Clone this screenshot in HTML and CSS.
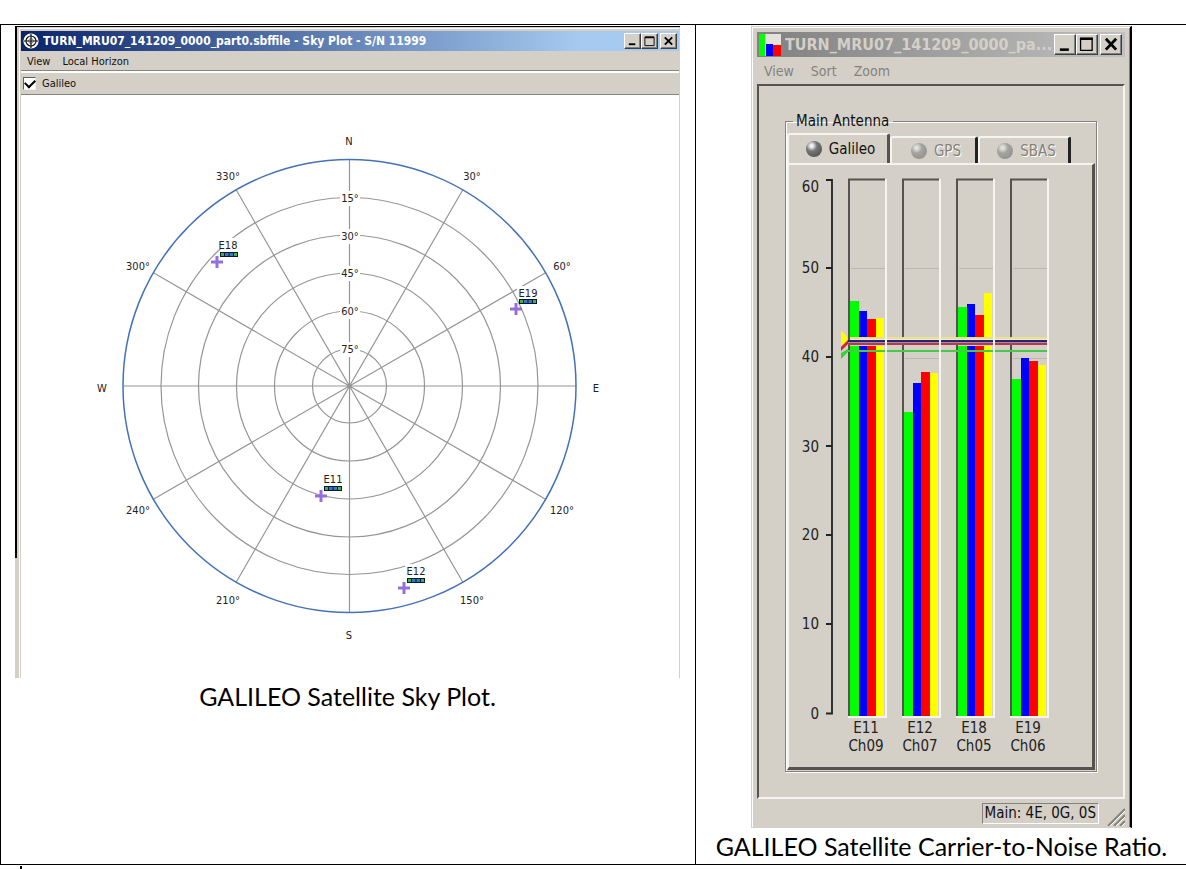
FILE: index.html
```html
<!DOCTYPE html>
<html lang="en">
<head>
<meta charset="utf-8">
<title>GALILEO satellites</title>
<link rel="stylesheet" href="styles.css">
</head>
<body>
<main class="sheet">
  <figure class="cell">
    <div class="backdrop">
      <section class="window sky">
        <header class="titlebar">
          <svg class="app-icon" viewBox="0 0 16 16" aria-hidden="true">
            <circle cx="8" cy="8" r="7.6" fill="#fff"/>
            <g fill="none" stroke="#111"><circle cx="8" cy="8" r="5" stroke-width="1.200"/><circle cx="8" cy="8" r="2.4" stroke-width=".5"/><path d="M8 1v14M1 8h14" stroke-width="1.200"/></g>
          </svg>
          <h1 class="title">TURN_MRU07_141209_0000_part0.sbffile - Sky Plot - S/N 11999</h1>
          <div class="controls">
            <button class="control" aria-label="Minimize"><svg viewBox="0 0 14 13"><path d="M3 10h7" stroke="#000" stroke-width="2"/></svg></button>
            <button class="control" aria-label="Maximize"><svg viewBox="0 0 14 13"><path d="M2 2.5h10v9h-10z" fill="none" stroke="#000"/><path d="M2 2.5h10" stroke="#000" stroke-width="2"/></svg></button>
            <button class="control close" aria-label="Close"><svg viewBox="0 0 14 13"><path d="M3 2.5l8 8M11 2.5l-8 8" stroke="#000" stroke-width="2"/></svg></button>
          </div>
        </header>
        <nav class="menu"><button>View</button><button>Local Horizon</button></nav>
        <div class="filter"><input type="checkbox" id="galileo" checked><label for="galileo">Galileo</label></div>
        <svg class="plot" viewBox="21 95 658 583" role="img" aria-label="Sky plot">
          <g fill="none" stroke="#969696" stroke-width="1.2">
            <circle cx="349.5" cy="386" r="37"/><circle cx="349.5" cy="386" r="75"/><circle cx="349.5" cy="386" r="113"/><circle cx="349.5" cy="386" r="151"/><circle cx="349.5" cy="386" r="188.500"/>
            <path d="M349.500 159V612M123 386H576M236 189.500L463 582.500M463 189.500L236 582.500M153 272.500L546 499.500M546 272.500L153 499.500"/>
          </g>
          <circle cx="349.500" cy="386" r="226.500" fill="none" stroke="#4472b8" stroke-width="1.5"/>
          <g fill="#fff">
            <path d="M340 191h20v15h-20zM340 229h20v15h-20zM340 266h20v15h-20zM340 304h20v15h-20zM340 342h20v15h-20z"/>
            <path d="M218 238h21v11h-21zM517 286h21v11h-21zM322 472h22v11h-22zM405 564h22v11h-22z"/>
          </g>
          <g class="plot-text">
            <text x="349" y="145">N</text><text x="596" y="392">E</text><text x="349" y="639">S</text><text x="102" y="392">W</text>
            <text x="472" y="180">30°</text><text x="562" y="270">60°</text><text x="562" y="514">120°</text><text x="472" y="604">150°</text>
            <text x="228" y="604">210°</text><text x="138" y="514">240°</text><text x="138" y="270">300°</text><text x="228" y="180">330°</text>
            <text x="350" y="202">15°</text><text x="350" y="240">30°</text><text x="350" y="277">45°</text><text x="350" y="315">60°</text><text x="350" y="353">75°</text>
            <text x="228" y="249">E18</text><text x="528" y="297">E19</text><text x="333" y="483">E11</text><text x="416" y="575">E12</text>
          </g>
          <defs>
            <g id="sat">
              <path d="M-6 0H6M0-6V6" stroke="#9370db" stroke-width="3"/>
              <path d="M3-10h18v5H3z" fill="#0b1830"/>
              <path d="M4-9h3v3H4zM17-9h3v3h-3z" fill="#38b64a"/><path d="M8-9h3.500v3H8zM12.500-9H16v3h-3.500z" fill="#3178c8"/>
            </g>
          </defs>
          <use href="#sat" x="217" y="262"/><use href="#sat" x="516" y="309"/><use href="#sat" x="321" y="496"/><use href="#sat" x="404" y="588"/>
        </svg>
      </section>
    </div>
    <figcaption>GALILEO Satellite Sky Plot.</figcaption>
  </figure>

  <figure class="cell">
    <section class="window ratio">
      <header class="titlebar">
        <svg class="app-icon" viewBox="0 0 22 22" aria-hidden="true"><path d="M0 0h22v22H0z" fill="#e4e2dc"/><path d="M0 0h6v22H0z" fill="#0f0"/><path d="M7 10h7v12H7z" fill="#00f"/><path d="M14 11h8v11h-8z" fill="#f00"/></svg>
        <h2 class="title">TURN_MRU07_141209_0000_pa...</h2>
        <div class="controls">
          <button class="control" aria-label="Minimize"><svg viewBox="0 0 14 13"><path d="M3 10.500h7" stroke="#000" stroke-width="2"/></svg></button>
          <button class="control" aria-label="Maximize"><svg viewBox="0 0 14 13"><path d="M2 2h9v9h-9z" fill="none" stroke="#000"/><path d="M1.500 2h10" stroke="#000" stroke-width="2"/></svg></button>
          <button class="control close" aria-label="Close"><svg viewBox="0 0 14 13"><path d="M3 2l8 8.500M11 2l-8 8.500" stroke="#000" stroke-width="2.200"/></svg></button>
        </div>
      </header>
      <nav class="menu"><button>View</button><button>Sort</button><button>Zoom</button></nav>
      <div class="client">
        <fieldset class="group">
          <legend>Main Antenna</legend>
          <div class="tabs" role="tablist">
            <button class="tab active" role="tab" aria-selected="true"><span class="led"></span>Galileo</button>
            <button class="tab" role="tab" aria-selected="false"><span class="led"></span>GPS</button>
            <button class="tab" role="tab" aria-selected="false"><span class="led"></span>SBAS</button>
          </div>
          <div class="page">
            <svg class="chart" viewBox="789 165 303 602" role="img" aria-label="Carrier-to-noise ratio">
              <path d="M826 180H832V713.500H826M826 268H832M826 357H832M826 446H832M826 535H832M826 624H832" fill="none" stroke="#222" stroke-width="1.800"/>
              <g class="scale"><text x="819" y="192">60</text><text x="819" y="273">50</text><text x="819" y="362">40</text><text x="819" y="452">30</text><text x="819" y="540">20</text><text x="819" y="629">10</text><text x="819" y="719">0</text></g>
              <path d="M851 268.500h34M905 268.500h34M959 268.500h34M1013 268.500h34M905 358.500h34M1013 358.500h34" stroke="#bab7b0"/>
              <path fill="#0f0" d="M850 301h9v415h-9zM904 412h9v304h-9zM958 307h9v409h-9zM1012 379h9v337h-9z"/>
              <path fill="#00f" d="M859 311h8v405h-8zM913 383h8v333h-8zM967 304h8v412h-8zM1021 358h8v358h-8z"/>
              <path fill="#f00" d="M867 319h9v397h-9zM921 372h9v344h-9zM975 315h9v401h-9zM1029 361h9v355h-9z"/>
              <path fill="#ff0" d="M876 318h8v398h-8zM930 373h8v343h-8zM984 293h8v423h-8zM1038 365h8v351h-8z"/>
              <path d="M849 716V179.500H885M903 716V179.500H939M957 716V179.500H993M1011 716V179.500H1047" fill="none" stroke="#555250" stroke-width="2"/>
              <path d="M850 337h197v2H850z" fill="#ede283"/><path d="M850 339h197v1H850z" fill="#eeeade"/>
              <path d="M848 340h199v2H848z" fill="#24247c"/><path d="M848 342h199v1H848z" fill="#9b8ba7"/><path d="M848 343h199v2H848z" fill="#bd3842"/><path d="M850 345h34v1h-34zM958 345h34v1h-34z" fill="#d4d0c8"/><path d="M848 350h199v2H848z" fill="#47c94a"/>
              <path d="M841 330L847 337V341L841 345z" fill="#ff0"/><path d="M841 347L848 340V344L841 351z" fill="#cf2327"/><path d="M841 353L848 349V352L841 359z" fill="#30d638"/>
              <path d="M886 179V717H848M940 179V717H902M994 179V717H956M1048 179V717H1010" fill="none" stroke="#f6f4f0" stroke-width="2"/>
              <g class="names"><text x="866" y="733">E11</text><text x="866" y="751">Ch09</text><text x="920" y="733">E12</text><text x="920" y="751">Ch07</text><text x="974" y="733">E18</text><text x="974" y="751">Ch05</text><text x="1028" y="733">E19</text><text x="1028" y="751">Ch06</text></g>
            </svg>
          </div>
        </fieldset>
      </div>
      <footer class="status"><span class="panel">Main: 4E, 0G, 0S</span>
        <svg class="grip" viewBox="0 0 18 18" aria-hidden="true"><path d="M1 18L18 1M7 18L18 7M13 18L18 13" stroke="#85827c" stroke-width="2"/><path d="M3 18L18 3M9 18L18 9M15 18L18 15" stroke="#fff"/></svg>
      </footer>
    </section>
    <figcaption>GALILEO Satellite Carrier-to-Noise Ratio.</figcaption>
  </figure>
</main>
<div class="row-mark"></div>
</body>
</html>
```
FILE: styles.css
```css
* { box-sizing: border-box; }
body { margin: 0; background: #fff; color: #111; font-family: "DejaVu Sans Condensed", "DejaVu Sans", sans-serif; overflow-x: hidden; }
button { font: inherit; color: inherit; border: 0; padding: 0; background: none; }
h1, h2, figure { margin: 0; }
svg { display: block; }

.sheet { display: grid; grid-template-columns: minmax(0, 695fr) minmax(0, 491fr); margin-top: 24px; border: 1px solid #000; border-width: 1px 0; }
.cell { min-width: 0; border-left: 1px solid #000; padding: 1px 15px 0 14px; }
.cell + .cell { padding: 1px 54px 0 55px; }
figcaption { font-family: Lato, sans-serif; font-size: 25px; line-height: 36px; text-align: center; color: #000; white-space: nowrap; }
.cell + .cell figcaption { margin: 0 -54px; }
.row-mark { width: 2px; height: 3px; margin: 1px 0 0 20px; background: #000; }

.window { background: #d4d0c8; }
.titlebar { display: flex; align-items: center; color: #fff; }
.title { flex: 1; min-width: 0; overflow: hidden; white-space: nowrap; font-weight: bold; }
.controls { display: flex; }
.control { display: grid; place-items: center; background: #d4d0c8; border: 1px solid; border-color: #fff #404040 #404040 #fff; box-shadow: inset -1px -1px #808080; }
.control.close { margin-left: 2px; }
.menu { display: flex; align-items: center; }

.backdrop { padding: 1px 0 0 2px; background: linear-gradient(#000 532px, #d4d0c8 532px); }
.sky { border-left: 2px solid #d4d0c8; border-top: 1px solid #d4d0c8; border-right: 1px solid #d4d0c8; box-shadow: inset 1px 1px #fff; padding: 3px 0 0 2px; font-size: 11px; }
.sky .titlebar { height: 20px; padding: 0 2px; gap: 4px; background: linear-gradient(90deg, #0a246a, #a6caf0 85%); }
.sky .app-icon { width: 16px; height: 16px; }
.sky .title { font-size: 12px; }
.sky .control { width: 17px; height: 16px; }
.sky .control svg { width: 13px; height: 12px; }
.sky .menu { height: 20px; padding: 2px 6px 0; gap: 12px; border-bottom: 1px solid #88857e; }
.filter { display: flex; align-items: center; gap: 6px; height: 24px; padding: 0 2px; border-top: 2px solid #fff; border-bottom: 1px solid #88857e; }
.filter input { appearance: none; width: 13px; height: 13px; margin: 0; background: #fff; border: 1px solid; border-color: #606060 #eee #eee #606060; display: grid; place-items: center; }
.filter input:checked::after { content: ""; width: 8px; height: 5px; border-left: 2px solid #000; border-bottom: 2px solid #000; transform: rotate(-45deg); margin-bottom: 3px; }
.plot { width: 100%; height: auto; background: #fff; }
.plot-text { font-size: 11px; text-anchor: middle; fill: #222; }

.ratio { border: 1px solid #d4d0c8; border-right: 2px solid #000; box-shadow: inset 1px 1px #fff, inset -1px 0 #808080; padding: 5px 5px 0 5px; font-size: 15px; }
.ratio .titlebar { height: 25px; padding: 0 3px 0 2px; background: linear-gradient(90deg, #808080, #c0c0c0); color: #d4d0c8; }
.ratio .app-icon { width: 22px; height: 22px; margin-right: 4px; }
.ratio .title { font-size: 16px; }
.ratio .control { width: 22px; height: 21px; }
.ratio .control svg { width: 18px; height: 17px; }
.ratio .menu { height: 27px; padding: 0 7px; gap: 17px; color: #85827c; font-size: 14px; }
.client { border: 2px solid; border-color: #555250 #f6f4f0 #f6f4f0 #555250; padding: 26px 26px 25px; }
.group { min-width: 0; margin: 0; border: 1px solid #85827c; box-shadow: 1px 1px #fff, inset 1px 1px #fff; padding: 0 1px 1px; }
.group legend { margin-left: 6px; padding: 0 4px 0 3px; font-size: 15px; line-height: 18px; }
.tabs { display: flex; align-items: flex-end; height: 33px; }
.tab { display: flex; align-items: center; justify-content: center; gap: 7px; width: 88px; height: 27px; border-top: 2px solid #f6f4f0; border-left: 2px solid #f6f4f0; border-right: 3px solid #222; border-radius: 3px 3px 0 0; color: #85827c; text-shadow: 1px 1px #fff; font-size: 15px; }
.tab { padding-left: 5px; }
.tab.active { width: 103px; height: 30px; color: #111; text-shadow: none; border-right-color: #555250; }
.tab:last-child { width: 93px; }
.led { width: 16px; height: 16px; border-radius: 50%; background: radial-gradient(circle at 35% 30%, #eee 0 10%, #777 35%, #444); }
.tab:not(.active) .led { opacity: .5; }
.page { border: 2px solid #f6f4f0; border-right: 3px solid #555250; border-bottom: 3px solid #555250; }
.chart { width: 100%; height: auto; }
.scale, .names { font-size: 15px; fill: #222; }
.scale { text-anchor: end; }
.names { text-anchor: middle; }
.status { display: flex; justify-content: flex-end; align-items: center; height: 28px; gap: 8px; }
.panel { border: 1px solid; border-color: #85827c #fff #fff #85827c; padding: 0 2px; line-height: 19px; font-size: 15px; }
.grip { width: 18px; height: 18px; margin-top: 8px; }
```
